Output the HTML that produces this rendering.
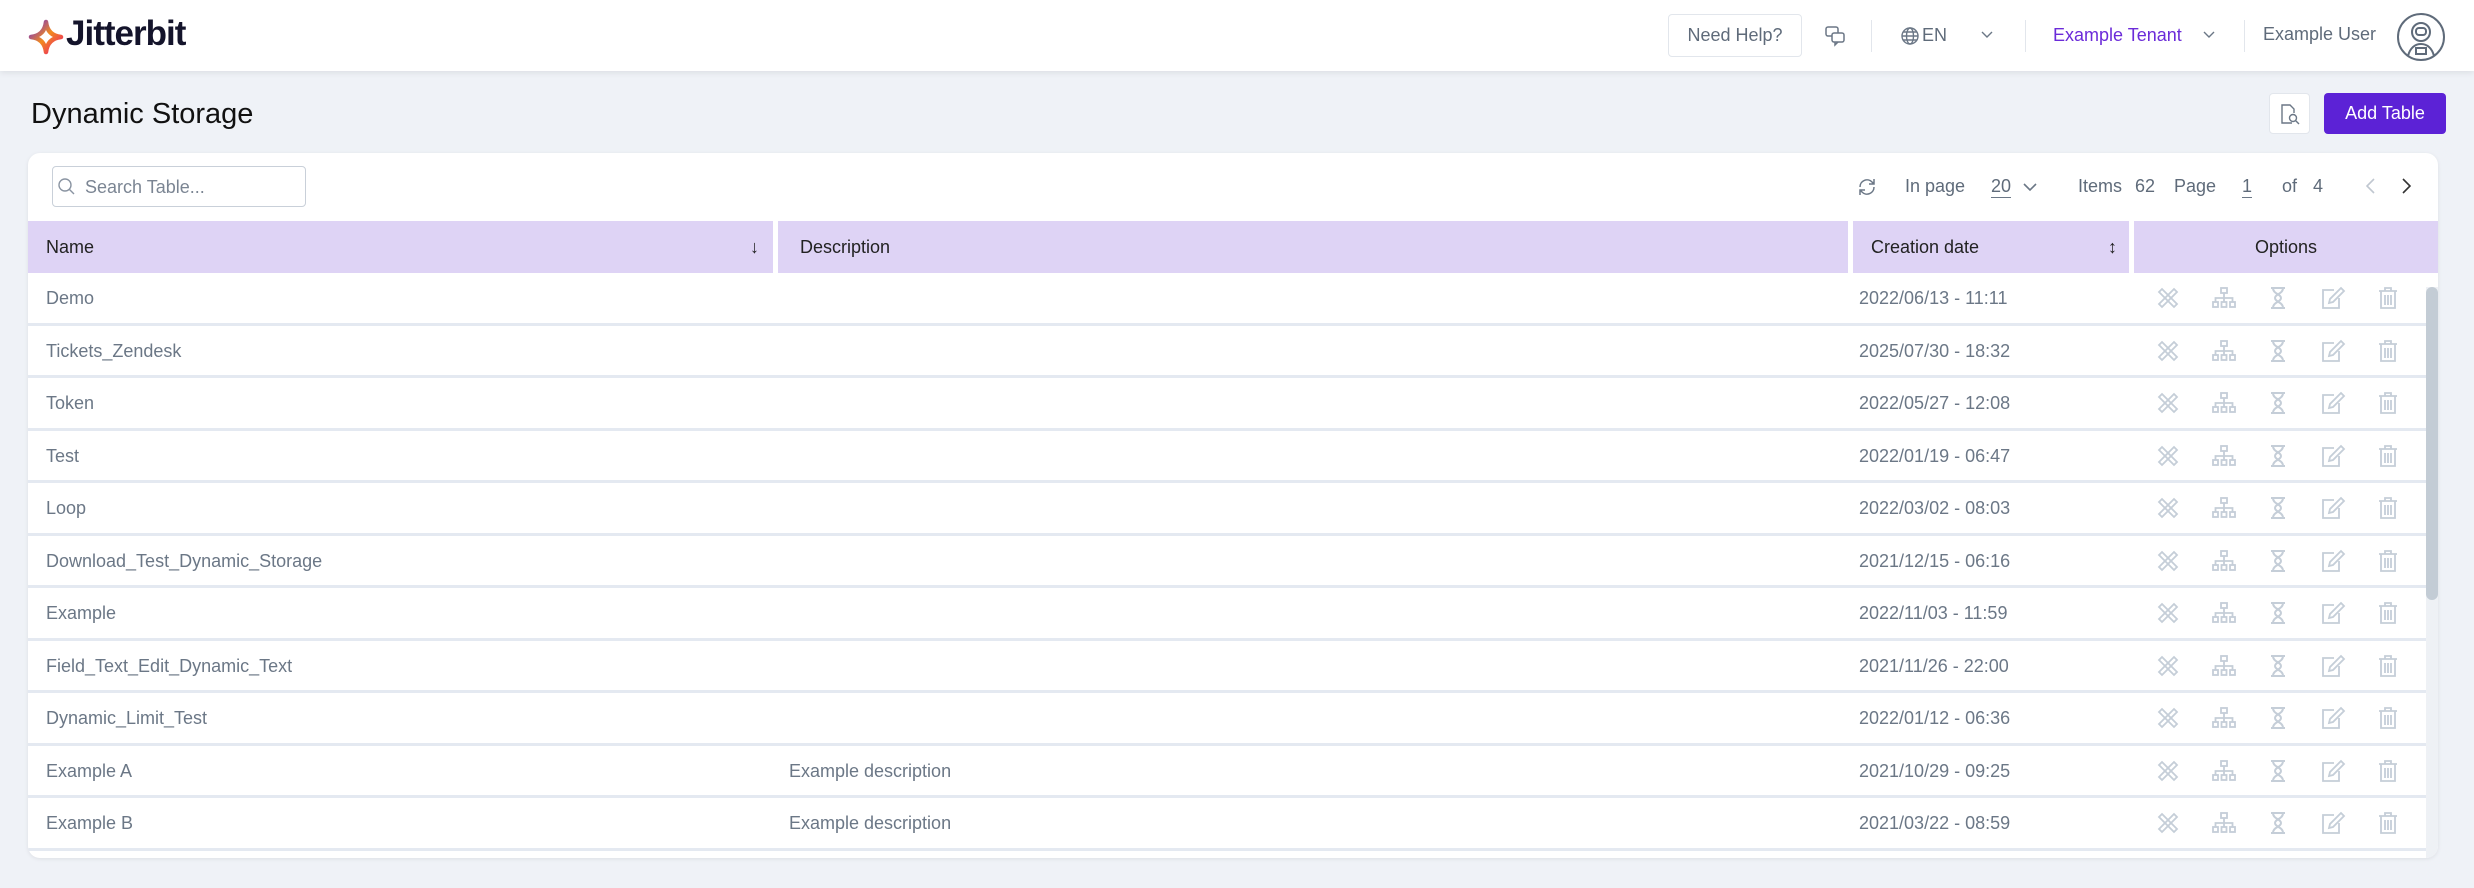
<!DOCTYPE html>
<html><head><meta charset="utf-8"><style>
*{box-sizing:border-box;margin:0;padding:0}
body{width:2474px;height:888px;background:#eff2f7;font-family:"Liberation Sans",sans-serif;position:relative;overflow:hidden;color:#334}
.a{position:absolute}
.hdr{left:0;top:0;width:2474px;height:71px;background:#fff;box-shadow:0 2px 6px rgba(0,0,0,.08)}
.t{font-size:18px;color:#5f6b7a;white-space:nowrap}
.sep{width:1px;height:32px;top:20px;background:#e2e6ec}
.card{left:28px;top:153px;width:2410px;height:705px;background:#fff;border-radius:12px;box-shadow:0 1px 4px rgba(0,0,0,.08);overflow:hidden}
.th{top:68px;height:52px;background:#ded3f5;font-size:18px;color:#222;line-height:52px;padding-left:18px}
.row{left:0;width:2398px;height:52.5px;border-bottom:3px solid #e4e9f1;font-size:18px;color:#6b7786;line-height:50px}
.row span{position:absolute}
.ic{position:absolute;top:13px}
</style></head><body>
<div class="a hdr">
 <svg class="a" style="left:28px;top:19px" width="36" height="36" viewBox="0 0 36 36"><defs><linearGradient id="g" x1="0" y1="0" x2="1" y2="1"><stop offset="0" stop-color="#6a2bd9"/><stop offset=".5" stop-color="#f28a1e"/><stop offset="1" stop-color="#ec1c6e"/></linearGradient></defs><path d="M18 3 C19 12 24 17 33 18 C24 19 19 24 18 33 C17 24 12 19 3 18 C12 17 17 12 18 3Z" fill="none" stroke="url(#g)" stroke-width="4.5" stroke-linejoin="round"/></svg>
 <div class="a" style="left:66px;top:14px;font-size:35px;font-weight:bold;color:#14142b;letter-spacing:-1px">Jitterbit</div>
 <div class="a t" style="left:1668px;top:14px;width:134px;height:43px;border:1px solid #e2e6ec;border-radius:4px;text-align:center;line-height:41px">Need Help?</div>
 <svg class="a" style="left:1824px;top:25px" width="22" height="22" viewBox="0 0 22 22" fill="none" stroke="#6b7786" stroke-width="1.5"><rect x="2" y="2" width="12" height="9" rx="2"/><rect x="8" y="8" width="12" height="9" rx="2" fill="#fff"/><path d="M11 17v3l3-3"/></svg>
 <div class="a sep" style="left:1871px"></div>
 <svg class="a" style="left:1900px;top:26px" width="20" height="20" viewBox="0 0 20 20" fill="none" stroke="#6b7786" stroke-width="1.4"><circle cx="10" cy="10" r="8"/><ellipse cx="10" cy="10" rx="3.5" ry="8"/><path d="M2 10h16M3.5 6h13M3.5 14h13"/></svg>
 <div class="a t" style="left:1922px;top:25px">EN</div>
 <svg class="a" style="left:1981px;top:31px" width="12" height="8" viewBox="0 0 12 8" fill="none" stroke="#6b7786" stroke-width="1.4"><path d="M1 1l5 5 5-5"/></svg>
 <div class="a sep" style="left:2025px"></div>
 <div class="a t" style="left:2053px;top:25px;color:#6b2bd9">Example Tenant</div>
 <svg class="a" style="left:2203px;top:31px" width="12" height="8" viewBox="0 0 12 8" fill="none" stroke="#6b7786" stroke-width="1.4"><path d="M1 1l5 5 5-5"/></svg>
 <div class="a sep" style="left:2244px"></div>
 <div class="a t" style="left:2263px;top:24px">Example User</div>
 <svg class="a" style="left:2396px;top:12px" width="50" height="50" viewBox="0 0 50 50" fill="none" stroke="#5f6b7a" stroke-width="2"><circle cx="25" cy="25" r="23"/><circle cx="25" cy="20" r="9"/><rect x="20" y="16" width="10" height="7" rx="3"/><path d="M12 44c2-8 7-12 13-12s11 4 13 12"/><rect x="20" y="36" width="10" height="6"/></svg>
</div>
<div class="a" style="left:31px;top:98px;font-size:29px;color:#111">Dynamic Storage</div>
<div class="a" style="left:2269px;top:93px;width:41px;height:41px;background:#fff;border:1px solid #e2e6ec;border-radius:4px"><svg style="margin:9px 0 0 10px" width="20" height="22" viewBox="0 0 20 22" fill="none" stroke="#6b7786" stroke-width="1.4"><path d="M12 20H2V2h8l4 4v4"/><circle cx="13" cy="15" r="3.5"/><path d="M15.5 17.5 19 21"/></svg></div>
<div class="a" style="left:2324px;top:93px;width:122px;height:41px;background:#5c22d6;border-radius:4px;color:#fff;font-size:18px;text-align:center;line-height:41px">Add Table</div>
<div class="a card">
 <div class="a" style="left:24px;top:13px;width:254px;height:41px;border:1px solid #c9d0d9;border-radius:4px"><svg class="a" style="left:4px;top:10px" width="20" height="20" viewBox="0 0 20 20" fill="none" stroke="#8a94a2" stroke-width="1.4"><circle cx="8" cy="8" r="6"/><path d="M12.5 12.5 17 17"/></svg><span class="a t" style="left:32px;top:10px;color:#7b8593">Search Table...</span></div>
 <svg class="a" style="left:1829px;top:23px" width="20" height="22" viewBox="0 0 20 22" fill="none" stroke="#6b7786" stroke-width="1.5"><path d="M3 11a7 7 0 0 1 12-5l2 2M17 11a7 7 0 0 1-12 5l-2-2M17 3v5h-5M3 19v-5h5"/></svg>
 <div class="a t" style="left:1877px;top:23px">In page</div>
 <div class="a t" style="left:1963px;top:23px;border-bottom:1px solid #6b7786">20</div>
 <svg class="a" style="left:1995px;top:30px" width="14" height="9" viewBox="0 0 14 9" fill="none" stroke="#6b7786" stroke-width="1.6"><path d="M1 1l6 6 6-6"/></svg>
 <div class="a t" style="left:2050px;top:23px">Items</div>
 <div class="a t" style="left:2107px;top:23px">62</div>
 <div class="a t" style="left:2146px;top:23px">Page</div>
 <div class="a t" style="left:2214px;top:23px;border-bottom:1px solid #6b7786">1</div>
 <div class="a t" style="left:2254px;top:23px">of</div>
 <div class="a t" style="left:2285px;top:23px">4</div>
 <svg class="a" style="left:2338px;top:25px" width="9" height="16" viewBox="0 0 9 16" fill="none" stroke="#c0c7d0" stroke-width="1.6"><path d="M8 1 1 8l7 7"/></svg>
 <svg class="a" style="left:2374px;top:25px" width="9" height="16" viewBox="0 0 9 16" fill="none" stroke="#333" stroke-width="1.6"><path d="M1 1l7 7-7 7"/></svg>
 <div class="a th" style="left:0;width:745px">Name<span class="a" style="right:14px;top:0">&#8595;</span></div>
 <div class="a th" style="left:750px;width:1070px;padding-left:22px">Description</div>
 <div class="a th" style="left:1825px;width:276px;padding-left:18px">Creation date<span class="a" style="right:12px;top:0">&#8597;</span></div>
 <div class="a th" style="left:2106px;width:304px;padding:0;text-align:center">Options</div>
 <div id="rows"></div>
 <div class="a" style="left:2398px;top:134px;width:12px;height:571px;background:#eef1f5"></div>
 <div class="a" style="left:2398px;top:134px;width:12px;height:313px;background:#c3ccd5;border-radius:6px"></div>
</div>
<script>
var d=[["Demo","","2022/06/13 - 11:11"],["Tickets_Zendesk","","2025/07/30 - 18:32"],["Token","","2022/05/27 - 12:08"],["Test","","2022/01/19 - 06:47"],["Loop","","2022/03/02 - 08:03"],["Download_Test_Dynamic_Storage","","2021/12/15 - 06:16"],["Example","","2022/11/03 - 11:59"],["Field_Text_Edit_Dynamic_Text","","2021/11/26 - 22:00"],["Dynamic_Limit_Test","","2022/01/12 - 06:36"],["Example A","Example description","2021/10/29 - 09:25"],["Example B","Example description","2021/03/22 - 08:59"]];
var ic='<svg class="ic" style="left:2128px" width="24" height="24" viewBox="0 0 24 24" fill="none" stroke="#c5ced8" stroke-width="1.8"><path d="M3 6l3-3 15 15-3 3z"/><path d="M21 6l-3-3L3 18l3 3z"/></svg>'+
'<svg class="ic" style="left:2183px" width="26" height="24" viewBox="0 0 26 24" fill="none" stroke="#c5ced8" stroke-width="1.8"><rect x="10" y="2" width="6" height="5"/><rect x="2" y="16" width="5" height="5"/><rect x="10.5" y="16" width="5" height="5"/><rect x="19" y="16" width="5" height="5"/><path d="M13 7v9M4.5 16v-4h17v4"/></svg>'+
'<svg class="ic" style="left:2240px" width="20" height="24" viewBox="0 0 20 24" fill="none" stroke="#c5ced8" stroke-width="2"><path d="M3 2h14M3 22h14M5 2c0 6 8 6 8 10s-8 4-8 10M15 2c0 6-8 6-8 10s8 4 8 10"/></svg>'+
'<svg class="ic" style="left:2292px" width="26" height="24" viewBox="0 0 26 24" fill="none" stroke="#c5ced8" stroke-width="1.8"><path d="M14 4H3v18h16V12"/><path d="M9 17l1-4 11-11 3 3-11 11z"/></svg>'+
'<svg class="ic" style="left:2350px" width="20" height="24" viewBox="0 0 20 24" fill="none" stroke="#c5ced8" stroke-width="1.8"><path d="M1 5h18M7 5V2h6v3M3 5v17h14V5M7 9v10M10 9v10M13 9v10"/></svg>';
var h='';for(var i=0;i<d.length;i++){h+='<div class="a row" style="top:'+(120+i*52.5)+'px"><span style="left:18px">'+d[i][0]+'</span><span style="left:761px">'+d[i][1]+'</span><span style="left:1831px">'+d[i][2]+'</span>'+ic+'</div>';}
document.getElementById('rows').innerHTML=h;
</script>
</body></html>
